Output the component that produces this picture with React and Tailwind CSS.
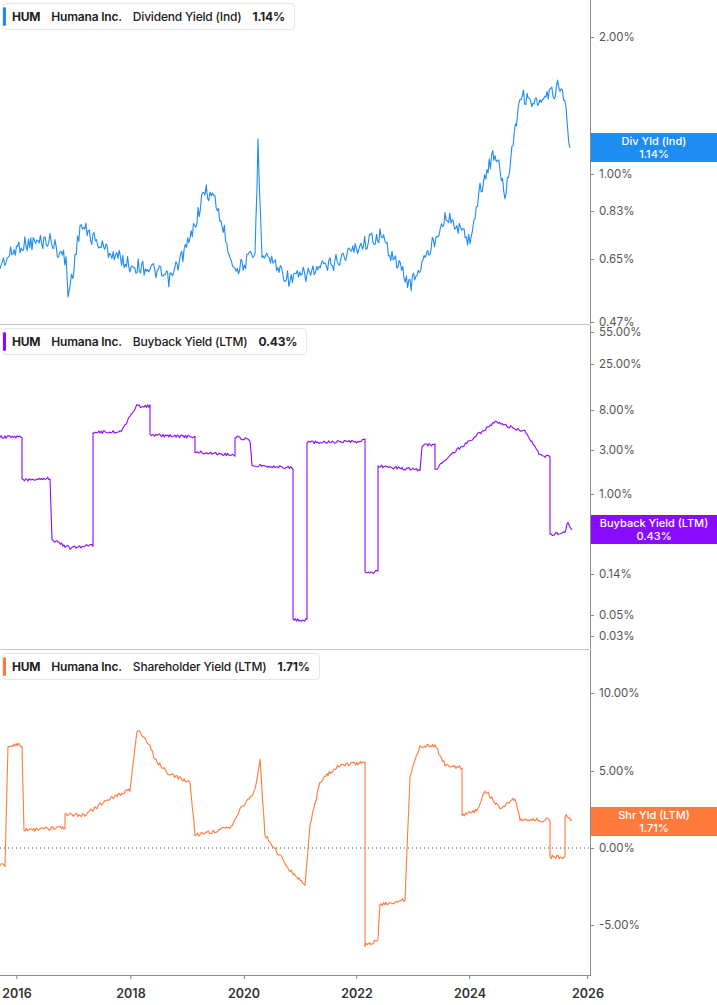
import React from "react"

let n = 0
const rnd = () => {
  n += 1
  const v = Math.sin(n * 12.9898 + 78.233) * 43758.5453
  return v - Math.floor(v) - 0.5
}

const build = (pts, amp) => {
  const out = []
  for (let i = 0; i < pts.length - 1; i++) {
    const [x0, y0] = pts[i]
    const [x1, y1] = pts[i + 1]
    const steps = Math.max(1, Math.round((x1 - x0) / 1.2))
    for (let s = 0; s < steps; s++) {
      const t = s / steps
      out.push([x0 + (x1 - x0) * t, y0 + (y1 - y0) * t + (amp ? rnd() * amp : 0)])
    }
  }
  out.push(pts[pts.length - 1])
  return out.map((p) => p[0].toFixed(1) + "," + p[1].toFixed(1)).join(" ")
}

const div = build(
  [[0,265],[20,245],[50,240],[66,260],[68,295],[75,260],[80,225],[100,245],[130,265],[150,268],[170,280],[190,240],[205,190],[215,200],[235,270],[255,255],[258,145],[262,250],[290,280],[330,265],[360,245],[380,235],[410,285],[430,250],[445,215],[470,240],[480,190],[495,150],[505,195],[520,95],[540,105],[560,85],[566,110],[570,148]],
  16
)
const buy = build(
  [[0,112],[22,112],[22,155],[50,153],[52,215],[70,223],[93,220],[93,107],[120,107],[137,81],[150,81],[150,110],[195,112],[195,127],[235,130],[235,112],[250,115],[252,140],[293,143],[293,295],[307,295],[307,117],[360,117],[365,115],[365,247],[378,247],[378,141],[420,145],[422,120],[435,120],[435,145],[450,130],[495,97],[525,107],[540,130],[550,132],[550,210],[565,207],[568,197],[572,205]],
  3
)
const shr = build(
  [[0,215],[5,215],[8,95],[22,95],[24,180],[65,178],[65,165],[85,165],[110,148],[130,140],[137,80],[150,95],[155,110],[170,125],[190,132],[195,185],[230,178],[240,160],[255,140],[260,110],[265,185],[290,220],[305,235],[310,175],[320,132],[335,118],[345,115],[365,112],[365,295],[378,290],[380,255],[405,250],[410,125],[420,96],[435,95],[445,115],[462,118],[462,165],[478,160],[485,140],[500,158],[515,148],[520,170],[550,170],[550,207],[565,207],[565,165],[572,170]],
  4
)

const Panel = ({ color, name, val, line, labels, box, zero, last }) => (
  <div className={`flex h-[325px] ${last ? "" : "border-b border-[#c8c8c8] mr-[127px]"}`}>
    <div className="relative w-[590px] shrink-0">
      <div className="absolute left-[2px] top-[3px] flex items-center gap-[11px] rounded border border-[#e6e6e6] bg-white pl-[9px] pr-[9px] h-[27px] text-[12px] tracking-[-0.2px] text-[#222]">
        <span className="absolute left-0 top-[3px] bottom-[3px] w-[3px] rounded" style={{ background: color }} />
        <span className="font-bold">HUM</span>
        <span className="font-semibold">Humana Inc.</span>
        <span className="font-medium">{name}</span>
        <span className="font-bold">{val}</span>
      </div>
      <svg width="590" height="325" className="block">
        {zero && <line x1="0" x2="590" y1={zero} y2={zero} stroke="#444" strokeDasharray="1 3" />}
        <polyline points={line} fill="none" stroke={color} strokeWidth="1.1" strokeLinejoin="round" />
      </svg>
    </div>
    <div className={`relative flex-1 border-l border-[#8c8c8c] ${last ? "" : "-mr-[127px]"}`}>
      {labels.map(([t, y]) => (
        <div key={t} className="absolute left-0 flex items-center text-[11.5px] text-[#555]" style={{ top: y - 8 }}>
          <span className="w-[3px] h-px bg-[#888] mr-[5px]" />
          {t}
        </div>
      ))}
      <div
        className="absolute left-0 right-0 h-[29px] flex flex-col items-center justify-center text-white text-[11px] leading-[13px] font-medium"
        style={{ top: box[0], background: color }}
      >
        <span>{box[1]}</span>
        <span>{box[2]}</span>
      </div>
    </div>
  </div>
)

export default function App() {
  return (
    <div className="w-[717px] h-[1005px] bg-white overflow-hidden" style={{ fontFamily: "Inter, 'Liberation Sans', sans-serif" }}>
      <Panel
        color="#1e8cf0"
        name="Dividend Yield (Ind)"
        val="1.14%"
        line={div}
        labels={[["2.00%", 37], ["1.00%", 174], ["0.83%", 211], ["0.65%", 259], ["0.47%", 322]]}
        box={[133, "Div Yld (Ind)", "1.14%"]}
      />
      <Panel
        color="#8a0cff"
        name="Buyback Yield (LTM)"
        val="0.43%"
        line={buy}
        labels={[["55.00%", 7], ["25.00%", 39], ["8.00%", 85], ["3.00%", 125], ["1.00%", 169], ["0.14%", 249], ["0.05%", 290], ["0.03%", 311]]}
        box={[190, "Buyback Yield (LTM)", "0.43%"]}
      />
      <Panel
        color="#ff7a3d"
        name="Shareholder Yield (LTM)"
        val="1.71%"
        line={shr}
        zero={198}
        labels={[["10.00%", 43], ["5.00%", 121], ["0.00%", 198], ["-5.00%", 275]]}
        box={[157, "Shr Yld (LTM)", "1.71%"]}
        last
      />
      <div className="flex h-[30px] border-t border-[#8c8c8c] w-[591px] relative text-[12.5px] font-semibold text-[#333]">
        {[["2016", 17], ["2018", 131], ["2020", 244], ["2022", 357], ["2024", 470], ["2026", 588]].map(([t, x]) => (
          <div key={t} className="absolute top-0 flex flex-col items-center -translate-x-1/2" style={{ left: x }}>
            <span className="w-px h-[3px] bg-[#888]" />
            <span className="mt-[6px]">{t}</span>
          </div>
        ))}
      </div>
    </div>
  )
}
